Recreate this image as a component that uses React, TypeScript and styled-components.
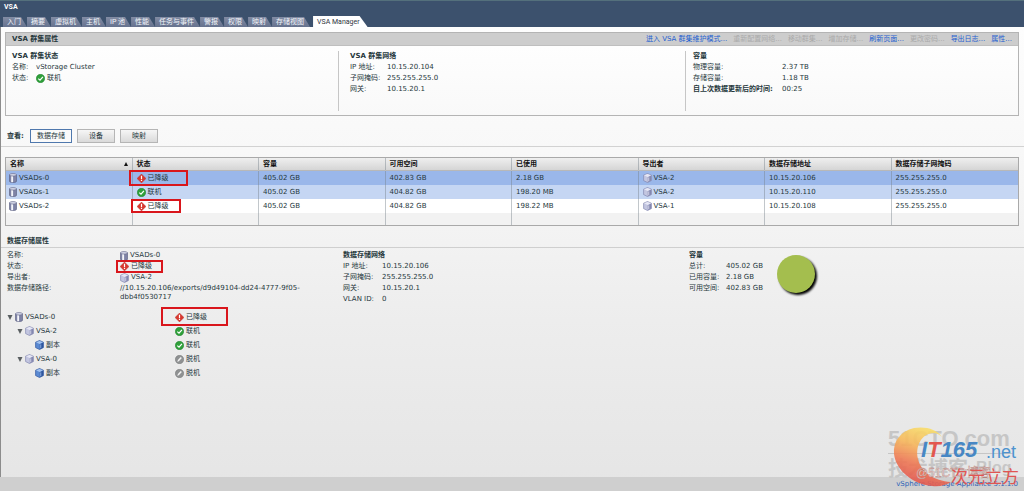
import React from "react";
import styled, { createGlobalStyle, css } from "styled-components";

const GlobalStyle = createGlobalStyle`
  * { box-sizing: border-box; }
  body {
    margin: 0;
    font-family: "DejaVu Sans", "Noto Sans CJK SC", sans-serif;
    font-size: 7px;
    line-height: 11px;
    color: #26383c;
  }
  button { font: inherit; color: inherit; margin: 0; padding: 0; border: 0; background: none; white-space: nowrap; }
  h1, h2, h3, dl, dd, dt, ul { margin: 0; padding: 0; font-size: 7px; }
  ul { list-style: none; }
`;

const Page = styled.div`
  position: relative;
  min-height: 100vh;
  display: flex;
  flex-direction: column;
  background: linear-gradient(#fdfdfd 27px, #f8f8f8 150px, #ededed 320px, #e5e5e5);
`;

const TopBar = styled.header`
  height: 27px;
  display: flex;
  flex-direction: column;
  justify-content: space-between;
  background: #3c516d;
  border-top: 1px solid #54707c;
  font-family: Roboto, "Noto Sans CJK SC", sans-serif;
`;

const AppTitle = styled.h1`
  padding: 1px 4px 0;
  line-height: 11px;
  font-weight: 700;
  color: #fff;
`;

const Tabs = styled.nav`
  display: flex;
  align-items: flex-end;
  padding-left: 3px;
`;

const Tab = styled.button<{ $active?: boolean }>`
  height: 10px;
  line-height: 10px;
  padding: 0 6px 0 4px;
  color: #f2f5fa;
  background: linear-gradient(#828ca4, #66728e);
  clip-path: polygon(0 0, calc(100% - 6px) 0, 100% 100%, 0 100%);
  ${(p) =>
    p.$active &&
    css`
      height: 11px;
      margin-left: 3px;
      padding-right: 8px;
      color: #2e3440;
      background: #fff;
      clip-path: polygon(0 0, calc(100% - 8px) 0, 100% 100%, 0 100%);
    `}
`;

const Main = styled.main`
  flex: 1;
  border-left: 1px solid #8c8c8c;
  padding-top: 5px;
`;

const Panel = styled.section`
  margin: 0 5px 0 4px;
  border: 1px solid #b4b4b4;
  background: linear-gradient(#fff, #f9f9f9);
`;

const PanelHead = styled.div`
  display: flex;
  justify-content: space-between;
  height: 13px;
  line-height: 13px;
  padding: 0 6px;
  background: #cdcdcd;
  border-bottom: 1px solid #bfbfbf;
`;

const Actions = styled.div`
  display: flex;
  gap: 6px;
`;

const Action = styled.button`
  color: #1f5fd0;
  &:disabled { color: #aaa; }
`;

const PanelCols = styled.div`
  display: grid;
  grid-template-columns: 332fr 347fr 333fr;
  padding: 5px 0 4px;
`;

const PanelCol = styled.div<{ $indent: number }>`
  height: 60px;
  padding-left: ${(p) => p.$indent}px;
  & + & { border-left: 1px solid #c6c6c6; }
`;

const GroupTitle = styled.h3`
  line-height: 11px;
`;

const Facts = styled.dl<{ $label: number }>`
  display: grid;
  grid-template-columns: ${(p) => p.$label}px auto;
  grid-auto-rows: minmax(11px, auto);
  line-height: 11px;
  align-content: start;
`;

const Strong = styled.dt`
  font-weight: 700;
  white-space: nowrap;
`;

const Toolbar = styled.div`
  display: flex;
  align-items: center;
  gap: 5px;
  padding: 13px 6px 3px;
  border-bottom: 1px solid #d2d2d2;
`;

const ToolbarLabel = styled.span`
  width: 18px;
  font-weight: 700;
  white-space: nowrap;
`;

const ViewButton = styled.button<{ $active?: boolean }>`
  width: ${(p) => (p.$active ? 42 : 38)}px;
  height: 14px;
  line-height: 12px;
  border: 1px solid ${(p) => (p.$active ? "#4f78ad" : "#b5b5b5")};
  background: ${(p) => (p.$active ? "#fafafa" : "linear-gradient(#f6f6f6, #dadada)")};
`;

const TableFrame = styled.div`
  margin: 10px 5px 0 4px;
  border: 1px solid #a9a9a9;
`;

const Table = styled.table`
  width: 100%;
  table-layout: fixed;
  border-collapse: separate;
  border-spacing: 0;
  th, td {
    padding: 0 4px;
    text-align: left;
    white-space: nowrap;
    border-right: 1px solid rgba(120, 130, 140, 0.45);
  }
  th:last-child, td:last-child { border-right: 0; }
  td:first-child { padding-left: 3px; }
  th {
    height: 13px;
    line-height: 12px;
    color: #111;
    background: linear-gradient(#efefef, #d5d5d5);
    border-bottom: 1px solid #b8b8b8;
  }
  td { height: 14px; line-height: 12px; }
`;

const Row = styled.tr<{ $tone: "selected" | "hover" | "plain" | "empty" }>`
  background: ${(p) => ({ selected: "#9ab7ea", hover: "#c5d6f3", plain: "#fff", empty: "#f2f2f2" })[p.$tone]};
  ${(p) => p.$tone === "empty" && css`td { height: 12px; }`}
`;

const HeadLabel = styled.span`
  display: flex;
  justify-content: space-between;
  align-items: center;
`;

const WithIcon = styled.span<{ $gap?: number }>`
  position: relative;
  display: inline-flex;
  align-items: center;
  gap: ${(p) => p.$gap ?? 2}px;
  vertical-align: top;
  white-space: nowrap;
  svg { flex: none; }
`;

const Mark = styled.span<{ $left: number; $top: number; $w: number; $h: number }>`
  position: absolute;
  left: ${(p) => p.$left}px;
  top: ${(p) => p.$top}px;
  width: ${(p) => p.$w}px;
  height: ${(p) => p.$h}px;
  border: 2px solid #d9161c;
  z-index: 1;
`;

const SectionTitle = styled.h2`
  padding: 9px 6px 0;
  line-height: 12px;
  border-bottom: 1px solid #cfcfcf;
`;

const DetailCols = styled.div`
  display: grid;
  grid-template-columns: 336fr 346fr 335fr;
  padding: 2px 0 0 6px;
`;

const Path = styled.dd`
  max-width: 190px;
  padding-top: 1px;
  line-height: 9px;
`;

const Capacity = styled.div`
  display: flex;
  gap: 13px;
`;

const Tree = styled.ul`
  margin-top: 5px;
  padding-left: 6px;
`;

const TreeRow = styled.li`
  display: grid;
  grid-template-columns: 168px auto;
  height: 14px;
  line-height: 14px;
`;

const Node = styled.span<{ $depth: number }>`
  display: flex;
  align-items: center;
  gap: 2px;
  padding-left: ${(p) => p.$depth * 10}px;
`;

const Footer = styled.footer`
  height: 14px;
  padding-right: 6px;
  line-height: 14px;
  text-align: right;
  color: #2c62b8;
  background: #cfcfcf;
`;

const Watermark = styled.svg`
  position: absolute;
  right: 0;
  bottom: 0;
  pointer-events: none;
`;

const Datastore = () => (
  <svg width="8" height="10" viewBox="0 0 8 10" aria-hidden="true">
    <path d="M.5 1.8v6.4C.5 9 2 9.6 4 9.6s3.500-.6 3.500-1.400V1.800z" fill="#7f83a6" stroke="#565a7c" strokeWidth=".6" />
    <path d="M2.200 2.500h1.900v6.700H2.200z" fill="#f4f5fa" />
    <ellipse cx="4" cy="1.800" rx="3.400" ry="1.300" fill="#d2d5e6" stroke="#666a8c" strokeWidth=".6" />
  </svg>
);

const Cube = ({ blue }: { blue?: boolean }) => {
  const [top, left, right] = blue ? ["#a5c4f0", "#5b8ad2", "#2e559e"] : ["#e6e7f5", "#c3c6e0", "#8488b0"];
  return (
    <svg width="9" height="10" viewBox="0 0 9 10" aria-hidden="true">
      <path d="M.6 2.200 4.500.5l3.900 1.700v5.400L4.500 9.500.6 7.600z" fill={left} stroke={right} strokeWidth=".7" />
      <path d="M4.800 4v5.200l3.400-1.700V2.400z" fill={right} />
      <path d="M1 2.300 4.500.9 8 2.300 4.600 3.900z" fill={top} />
      <path d="M5.400 4.600l.8-.4v3.700l-.8.4z" fill={top} />
    </svg>
  );
};

const Triangle = () => (
  <svg width="6" height="5" viewBox="0 0 6 5" aria-hidden="true">
    <path d="M.5 0h5L3 5z" fill="#5a5f62" />
  </svg>
);

const SortArrow = () => (
  <svg width="4" height="4" viewBox="0 0 4 4" aria-hidden="true">
    <path d="M0 4h4L2 0z" fill="#111" />
  </svg>
);

type State = "degraded" | "online" | "offline";

const StateIcon = ({ state }: { state: State }) => (
  <svg width="9" height="9" viewBox="0 0 9 9" aria-hidden="true">
    {state === "degraded" && (
      <>
        <path d="M4.500 0 9 4.500 4.500 9 0 4.500z" fill="#d8382f" stroke="#b8302a" strokeWidth=".4" strokeLinejoin="round" />
        <path d="M3.900 1.800h1.200v3.500H3.900zM3.900 6h1.200v1.100H3.900z" fill="#fff" />
      </>
    )}
    {state === "online" && (
      <>
        <circle cx="4.500" cy="4.500" r="4.200" fill="#2fa03a" stroke="#1d7f2a" strokeWidth=".5" />
        <path d="M2.300 4.600 4 6.200l2.900-3.400" fill="none" stroke="#fff" strokeWidth="1.200" />
      </>
    )}
    {state === "offline" && (
      <>
        <circle cx="4.500" cy="4.500" r="4.200" fill="#8f9192" stroke="#747677" strokeWidth=".5" />
        <path d="M2.300 6.900l.6-2L5.700 2l1.200 1.100-2.800 3z" fill="#f2f2f2" />
      </>
    )}
  </svg>
);

const stateText: Record<State, string> = { degraded: "已降级", online: "联机", offline: "脱机" };

type Box = [number, number, number, number];

const Status = ({ state, box }: { state: State; box?: Box }) => (
  <WithIcon $gap={2}>
    <StateIcon state={state} />
    {stateText[state]}
    {box && <Mark $left={box[0]} $top={box[1]} $w={box[2]} $h={box[3]} />}
  </WithIcon>
);

const tabs = ["入门", "摘要", "虚拟机", "主机", "IP 池", "性能", "任务与事件", "警报", "权限", "映射", "存储视图"];

const actions: [string, boolean][] = [
  ["进入 VSA 群集维护模式...", true],
  ["重新配置网络...", false],
  ["移动群集...", false],
  ["增加存储...", false],
  ["刷新页面...", true],
  ["更改密码...", false],
  ["导出日志...", true],
  ["属性...", true],
];

const columns = ["名称", "状态", "容量", "可用空间", "已使用", "导出者", "数据存储地址", "数据存储子网掩码"];

const datastores: {
  name: string; state: State; box?: Box; free: string; used: string; owner: string; ip: string;
  tone: "selected" | "hover" | "plain";
}[] = [
  { name: "VSADs-0", state: "degraded", box: [-8, -2, 59, 16], free: "402.83 GB", used: "2.18 GB", owner: "VSA-2", ip: "10.15.20.106", tone: "selected" },
  { name: "VSADs-1", state: "online", free: "404.82 GB", used: "198.20 MB", owner: "VSA-2", ip: "10.15.20.110", tone: "hover" },
  { name: "VSADs-2", state: "degraded", box: [-6, -1, 50, 14], free: "404.82 GB", used: "198.22 MB", owner: "VSA-1", ip: "10.15.20.108", tone: "plain" },
];

const tree: { label: string; depth: number; icon: "store" | "vsa" | "copy"; state: State; box?: Box }[] = [
  { label: "VSADs-0", depth: 0, icon: "store", state: "degraded", box: [-14, -3, 67, 19] },
  { label: "VSA-2", depth: 1, icon: "vsa", state: "online" },
  { label: "副本", depth: 2, icon: "copy", state: "online" },
  { label: "VSA-0", depth: 1, icon: "vsa", state: "offline" },
  { label: "副本", depth: 2, icon: "copy", state: "offline" },
];

const Spacer = styled.span`
  width: 6px;
`;

export default function App() {
  return (
    <>
      <GlobalStyle />
      <Page>
        <TopBar>
          <AppTitle>VSA</AppTitle>
          <Tabs>
            {tabs.map((t) => (
              <Tab key={t}>{t}</Tab>
            ))}
            <Tab $active>VSA Manager</Tab>
          </Tabs>
        </TopBar>
        <Main>
          <Panel>
            <PanelHead>
              <h2>VSA 群集属性</h2>
              <Actions>
                {actions.map(([label, enabled]) => (
                  <Action key={label} disabled={!enabled}>{label}</Action>
                ))}
              </Actions>
            </PanelHead>
            <PanelCols>
              <PanelCol $indent={6}>
                <GroupTitle>VSA 群集状态</GroupTitle>
                <Facts $label={24}>
                  <dt>名称:</dt><dd>vStorage Cluster</dd>
                  <dt>状态:</dt><dd><Status state="online" /></dd>
                </Facts>
              </PanelCol>
              <PanelCol $indent={11}>
                <GroupTitle>VSA 群集网络</GroupTitle>
                <Facts $label={37}>
                  <dt>IP 地址:</dt><dd>10.15.20.104</dd>
                  <dt>子网掩码:</dt><dd>255.255.255.0</dd>
                  <dt>网关:</dt><dd>10.15.20.1</dd>
                </Facts>
              </PanelCol>
              <PanelCol $indent={7}>
                <GroupTitle>容量</GroupTitle>
                <Facts $label={89}>
                  <dt>物理容量:</dt><dd>2.37 TB</dd>
                  <dt>存储容量:</dt><dd>1.18 TB</dd>
                  <Strong>自上次数据更新后的时间:</Strong><dd>00:25</dd>
                </Facts>
              </PanelCol>
            </PanelCols>
          </Panel>

          <Toolbar>
            <ToolbarLabel>查看:</ToolbarLabel>
            <ViewButton $active>数据存储</ViewButton>
            <ViewButton>设备</ViewButton>
            <ViewButton>映射</ViewButton>
          </Toolbar>

          <TableFrame>
            <Table>
              <thead>
                <tr>
                  {columns.map((c, i) => (
                    <th key={c}>
                      <HeadLabel>{c}{i === 0 && <SortArrow />}</HeadLabel>
                    </th>
                  ))}
                </tr>
              </thead>
              <tbody>
                {datastores.map((d) => (
                  <Row key={d.name} $tone={d.tone}>
                    <td><WithIcon><Datastore />{d.name}</WithIcon></td>
                    <td><Status state={d.state} box={d.box} /></td>
                    <td>405.02 GB</td>
                    <td>{d.free}</td>
                    <td>{d.used}</td>
                    <td><WithIcon><Cube />{d.owner}</WithIcon></td>
                    <td>{d.ip}</td>
                    <td>255.255.255.0</td>
                  </Row>
                ))}
                <Row $tone="empty">
                  {columns.map((c) => <td key={c} />)}
                </Row>
              </tbody>
            </Table>
          </TableFrame>

          <SectionTitle>数据存储属性</SectionTitle>
          <DetailCols>
            <Facts $label={113}>
              <dt>名称:</dt><dd><WithIcon><Datastore />VSADs-0</WithIcon></dd>
              <dt>状态:</dt><dd><Status state="degraded" box={[-4, -1, 47, 13]} /></dd>
              <dt>导出者:</dt><dd><WithIcon><Cube />VSA-2</WithIcon></dd>
              <dt>数据存储路径:</dt><Path>//10.15.20.106/exports/d9d49104-dd24-4777-9f05-dbb4f0530717</Path>
            </Facts>
            <div>
              <GroupTitle>数据存储网络</GroupTitle>
              <Facts $label={39}>
                <dt>IP 地址:</dt><dd>10.15.20.106</dd>
                <dt>子网掩码:</dt><dd>255.255.255.0</dd>
                <dt>网关:</dt><dd>10.15.20.1</dd>
                <dt>VLAN ID:</dt><dd>0</dd>
              </Facts>
            </div>
            <Capacity>
              <div>
                <GroupTitle>容量</GroupTitle>
                <Facts $label={37}>
                  <dt>总计:</dt><dd>405.02 GB</dd>
                  <dt>已用容量:</dt><dd>2.18 GB</dd>
                  <dt>可用空间:</dt><dd>402.83 GB</dd>
                </Facts>
              </div>
              <svg width="44" height="48" viewBox="0 0 44 48" role="img" aria-label="容量">
                <defs>
                  <filter id="pieShadow" x="-20%" y="-20%" width="140%" height="140%">
                    <feGaussianBlur stdDeviation="1" />
                  </filter>
                </defs>
                <circle cx="22" cy="26" r="19" fill="#000" filter="url(#pieShadow)" />
                <circle cx="20" cy="24" r="19" fill="#a4be4e" />
              </svg>
            </Capacity>
          </DetailCols>

          <Tree>
            {tree.map((n, i) => (
              <TreeRow key={i}>
                <Node $depth={n.depth}>
                  {n.icon === "copy" ? <Spacer /> : <Triangle />}
                  {n.icon === "store" ? <Datastore /> : <Cube blue={n.icon === "copy"} />}
                  {n.label}
                </Node>
                <span><Status state={n.state} box={n.box} /></span>
              </TreeRow>
            ))}
          </Tree>
        </Main>
        <Footer>vSphere Storage Appliance 5.1.1.0</Footer>

        <Watermark width="139" height="71" viewBox="0 0 139 71" aria-hidden="true">
          <defs>
            <linearGradient id="swoosh" x1="0.700" y1="0" x2="0.400" y2="1">
              <stop offset="0" stopColor="#f9e36c" />
              <stop offset=".35" stopColor="#f7b85c" />
              <stop offset=".65" stopColor="#ee7a55" />
              <stop offset="1" stopColor="#e0504c" />
            </linearGradient>
          </defs>
          <g fontFamily='"Liberation Sans", "Noto Sans CJK SC", sans-serif' fontWeight="700">
            <g fill="#c6c6c6">
              <text x="3" y="26" fontSize="22">51CTO.com</text>
              <text x="3" y="56" fontSize="20">技术博客</text>
              <text x="91" y="53" fontSize="16">Blog</text>
              <path d="M3 33h125v1H3z" />
            </g>
            <path
              d="M57 17C52 9 40 6 29 8C15 11 8 22 9 34C11 50 27 64 47 66C55 67 61 65 66 62C49 61 36 52 33 39C30 27 36 14 48 13C52 13 55 15 57 17z"
              fill="url(#swoosh)"
              opacity=".9"
            />
            <text x="36" y="37" fontStyle="italic" fontSize="22" fill="#4787c4">
              I<tspan fill="#e2574f">T</tspan>165
            </text>
            <text x="101" y="38" fontSize="18" fontWeight="400" fill="#4d93cf">.net</text>
            <text x="31" y="57" fontSize="12" fontWeight="400" fill="#f3dcd8" stroke="#a8716c" strokeWidth=".3">@51CTO博客</text>
            <text x="66" y="63" fontSize="17" fontWeight="400" fill="#e05552">次元立方</text>
          </g>
        </Watermark>
      </Page>
    </>
  );
}
